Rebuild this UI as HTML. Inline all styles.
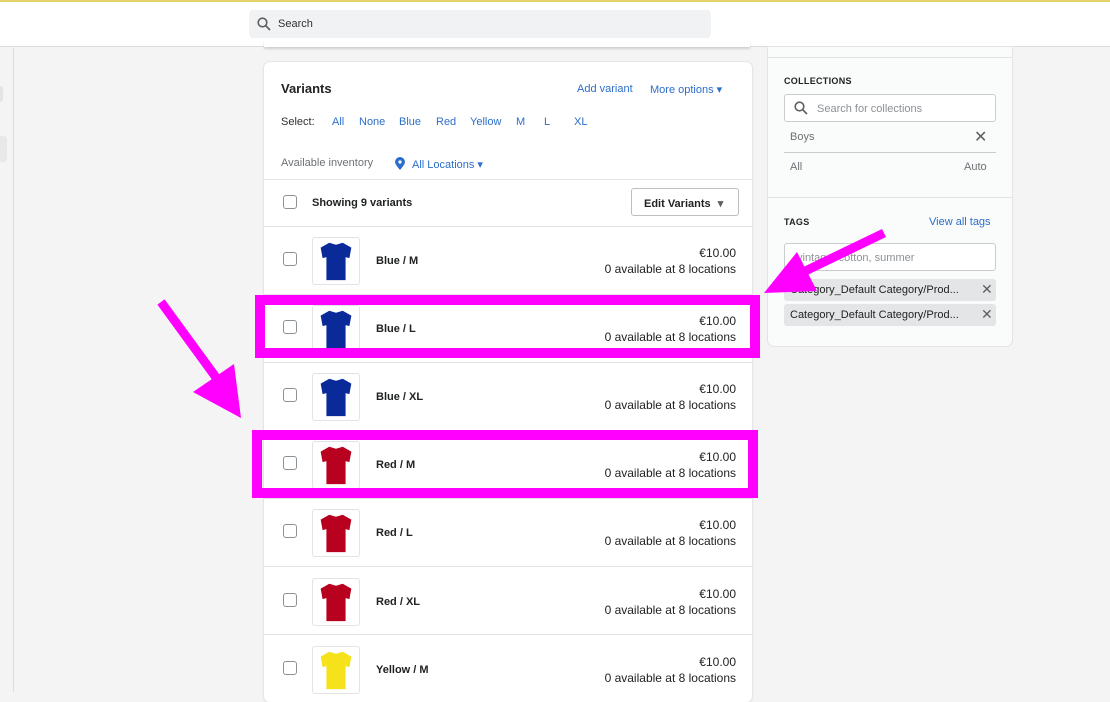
<!DOCTYPE html>
<html><head><style>
*{box-sizing:border-box;margin:0;padding:0}
body{width:1110px;height:692px;overflow:hidden;background:#f4f4f4;font-family:"Liberation Sans",sans-serif;color:#212b36;position:relative;font-size:11px}
.abs{position:absolute}
.top{left:0;top:0;width:1110px;height:47px;background:#fff;border-top:2px solid #e3d36a;border-bottom:1px solid #dcdcdc}
.search{left:249px;top:10px;width:462px;height:28px;background:#f1f2f3;border-radius:4px}
.card{left:264px;top:62px;width:488px;height:640px;background:#fff;border-radius:6px;box-shadow:0 0 0 1px #e4e5e7,0 1px 2px rgba(0,0,0,.1)}
.blue{color:#2c6ecb}
.row{left:264px;width:488px;height:68px;border-top:1px solid #e1e3e5;background:#fff}
.cb{position:absolute;left:19px;width:14px;height:14px;border:1px solid #8c9196;border-radius:3px;background:#fff}
.th{position:absolute;left:48px;width:48px;height:48px;border:1px solid #e1e3e5;border-radius:3px;background:#fff}
.nm{position:absolute;left:112px;font-weight:bold;font-size:11px;color:#202223}
.pr{position:absolute;right:16px;text-align:right;font-size:12px;color:#202223;line-height:16px}
.mag{border:10px solid #ff00ff}
.rc{left:768px;top:47px;width:244px;height:299px;background:#fafbfb;border-radius:0 0 6px 6px;box-shadow:0 0 0 1px #e1e3e5}
.sel{position:absolute;top:54px}
</style></head><body>
<div class="abs top"></div>
<div class="abs search"><svg class="abs" style="left:8px;top:7px" width="14" height="14" viewBox="0 0 14 14"><circle cx="5.5" cy="5.5" r="4.3" fill="none" stroke="#5c5f62" stroke-width="1.6"/><path d="M8.7 8.7L13 13" stroke="#5c5f62" stroke-width="1.7"/></svg><span class="abs" style="left:29px;top:8px;color:#303030">Search</span></div>
<div class="abs" style="left:13px;top:48px;width:1px;height:644px;background:#dcdcdc"></div>
<div class="abs" style="left:0;top:86px;width:3px;height:16px;background:#e4e4e4;border-radius:0 8px 8px 0"></div>
<div class="abs" style="left:0;top:136px;width:7px;height:26px;background:#e8e8e8;border-radius:0 3px 3px 0"></div>
<div class="abs" style="left:264px;top:40px;width:486px;height:7px;background:#fff;box-shadow:0 2px 2px rgba(0,0,0,.15)"></div>
<div class="abs card">
<div class="abs" style="left:17px;top:19px;font-size:13px;font-weight:bold;color:#202223">Variants</div>
<div class="abs blue" style="left:313px;top:21px">Add variant</div>
<div class="abs blue" style="left:386px;top:21px">More options ▾</div>
<div class="sel" style="left:17px;color:#303030">Select:</div>
<div class="sel blue" style="left:68px">All</div>
<div class="sel blue" style="left:95px">None</div>
<div class="sel blue" style="left:135px">Blue</div>
<div class="sel blue" style="left:172px">Red</div>
<div class="sel blue" style="left:206px">Yellow</div>
<div class="sel blue" style="left:252px">M</div>
<div class="sel blue" style="left:280px">L</div>
<div class="sel blue" style="left:310px">XL</div>
<div class="abs" style="left:17px;top:95px;color:#6d7175">Available inventory</div>
<svg class="abs" style="left:131px;top:95px" width="10" height="13" viewBox="0 0 10 13"><path d="M5 13C5 13 0 7.5 0 5a5 5 0 0110 0c0 2.5-5 8-5 8z" fill="#2c6ecb"/><circle cx="5" cy="5" r="1.6" fill="#fff"/></svg>
<div class="abs blue" style="left:148px;top:96px">All Locations ▾</div>
<div class="abs" style="left:0;top:117px;width:488px;height:1px;background:#e1e3e5"></div>
<div class="cb" style="top:133px"></div>
<div class="abs" style="left:48px;top:135px;font-weight:bold;color:#202223">Showing 9 variants</div>
<div class="abs" style="left:367px;top:126px;width:108px;height:28px;border:1px solid #babfc3;border-radius:3px;font-weight:bold;padding:8px 0 0 12px;color:#202223">Edit Variants <span style="color:#5c5f62;margin-left:4px">▾</span></div>
</div>

<div class="abs row" style="top:226px"><div class="cb" style="top:25px"></div><div class="th" style="top:10px"><svg viewBox="0 0 48 48" width="46" height="46"><path d="M17 5l7 2 7-2 9 5-2 11-4-1v24H14V20l-4 1-2-11z" fill="#0a2a9a"/></svg></div><div class="nm" style="top:28px">Blue / M</div><div class="pr" style="top:18px">€10.00<br>0 available at 8 locations</div></div>
<div class="abs row" style="top:294px"><div class="cb" style="top:25px"></div><div class="th" style="top:10px"><svg viewBox="0 0 48 48" width="46" height="46"><path d="M17 5l7 2 7-2 9 5-2 11-4-1v24H14V20l-4 1-2-11z" fill="#0a2a9a"/></svg></div><div class="nm" style="top:28px">Blue / L</div><div class="pr" style="top:18px">€10.00<br>0 available at 8 locations</div></div>
<div class="abs row" style="top:362px"><div class="cb" style="top:25px"></div><div class="th" style="top:10px"><svg viewBox="0 0 48 48" width="46" height="46"><path d="M17 5l7 2 7-2 9 5-2 11-4-1v24H14V20l-4 1-2-11z" fill="#0a2a9a"/></svg></div><div class="nm" style="top:28px">Blue / XL</div><div class="pr" style="top:18px">€10.00<br>0 available at 8 locations</div></div>
<div class="abs row" style="top:430px"><div class="cb" style="top:25px"></div><div class="th" style="top:10px"><svg viewBox="0 0 48 48" width="46" height="46"><path d="M17 5l7 2 7-2 9 5-2 11-4-1v24H14V20l-4 1-2-11z" fill="#b8001f"/></svg></div><div class="nm" style="top:28px">Red / M</div><div class="pr" style="top:18px">€10.00<br>0 available at 8 locations</div></div>
<div class="abs row" style="top:498px"><div class="cb" style="top:25px"></div><div class="th" style="top:10px"><svg viewBox="0 0 48 48" width="46" height="46"><path d="M17 5l7 2 7-2 9 5-2 11-4-1v24H14V20l-4 1-2-11z" fill="#b8001f"/></svg></div><div class="nm" style="top:28px">Red / L</div><div class="pr" style="top:18px">€10.00<br>0 available at 8 locations</div></div>
<div class="abs row" style="top:566px"><div class="cb" style="top:26px"></div><div class="th" style="top:11px"><svg viewBox="0 0 48 48" width="46" height="46"><path d="M17 5l7 2 7-2 9 5-2 11-4-1v24H14V20l-4 1-2-11z" fill="#b8001f"/></svg></div><div class="nm" style="top:29px">Red / XL</div><div class="pr" style="top:19px">€10.00<br>0 available at 8 locations</div></div>
<div class="abs row" style="top:634px;height:60px"><div class="cb" style="top:26px"></div><div class="th" style="top:11px"><svg viewBox="0 0 48 48" width="46" height="46"><path d="M17 5l7 2 7-2 9 5-2 11-4-1v24H14V20l-4 1-2-11z" fill="#f5e21a"/></svg></div><div class="nm" style="top:29px">Yellow / M</div><div class="pr" style="top:19px">€10.00<br>0 available at 8 locations</div></div>

<div class="abs rc">
<div class="abs" style="left:0;top:10px;width:244px;height:1px;background:#e1e3e5"></div>
<div class="abs" style="left:16px;top:29px;font-size:9px;font-weight:bold;letter-spacing:.3px;color:#202223">COLLECTIONS</div>
<div class="abs" style="left:16px;top:47px;width:212px;height:28px;border:1px solid #c9cccf;border-radius:3px;background:#fff"><svg class="abs" style="left:9px;top:6px" width="14" height="14" viewBox="0 0 14 14"><circle cx="5.5" cy="5.5" r="4.3" fill="none" stroke="#5c5f62" stroke-width="1.6"/><path d="M8.7 8.7L13 13" stroke="#5c5f62" stroke-width="1.7"/></svg><span class="abs" style="left:32px;top:8px;color:#8c9196">Search for collections</span></div>
<div class="abs" style="left:22px;top:84px;color:#6d7175">Boys</div>
<div class="abs" style="left:206px;top:80px;font-size:16px;color:#5c5f62">✕</div>
<div class="abs" style="left:16px;top:105px;width:212px;height:1px;background:#c9cccf"></div>
<div class="abs" style="left:22px;top:114px;color:#6d7175">All</div>
<div class="abs" style="left:196px;top:114px;color:#6d7175">Auto</div>
<div class="abs" style="left:0;top:150px;width:244px;height:1px;background:#e1e3e5"></div>
<div class="abs" style="left:16px;top:170px;font-size:9px;font-weight:bold;letter-spacing:.3px;color:#202223">TAGS</div>
<div class="abs blue" style="left:161px;top:169px">View all tags</div>
<div class="abs" style="left:16px;top:196px;width:212px;height:28px;border:1px solid #c9cccf;border-radius:3px;background:#fff"><span class="abs" style="left:12px;top:8px;color:#8c9196">vintage, cotton, summer</span></div>
<div class="abs" style="left:16px;top:232px;width:212px;height:22px;background:#e4e5e7;border-radius:3px"><span class="abs" style="left:6px;top:5px;color:#202223">Category_Default Category/Prod...</span><span class="abs" style="left:197px;top:2px;font-size:14px;color:#5c5f62">✕</span></div>
<div class="abs" style="left:16px;top:257px;width:212px;height:22px;background:#e4e5e7;border-radius:3px"><span class="abs" style="left:6px;top:5px;color:#202223">Category_Default Category/Prod...</span><span class="abs" style="left:197px;top:2px;font-size:14px;color:#5c5f62">✕</span></div>
</div>

<div class="abs mag" style="left:255px;top:295px;width:505px;height:63px"></div>
<div class="abs mag" style="left:252px;top:430px;width:506px;height:68px"></div>
<svg class="abs" style="left:0;top:0" width="1110" height="692">
<path d="M161 302L223 387" stroke="#ff00ff" stroke-width="9"/>
<polygon points="193,392 234,364 241,418" fill="#ff00ff"/>
<path d="M884 233L795 276" stroke="#ff00ff" stroke-width="9"/>
<polygon points="764,293 797,252 817,291" fill="#ff00ff"/>
</svg>
</body></html>
